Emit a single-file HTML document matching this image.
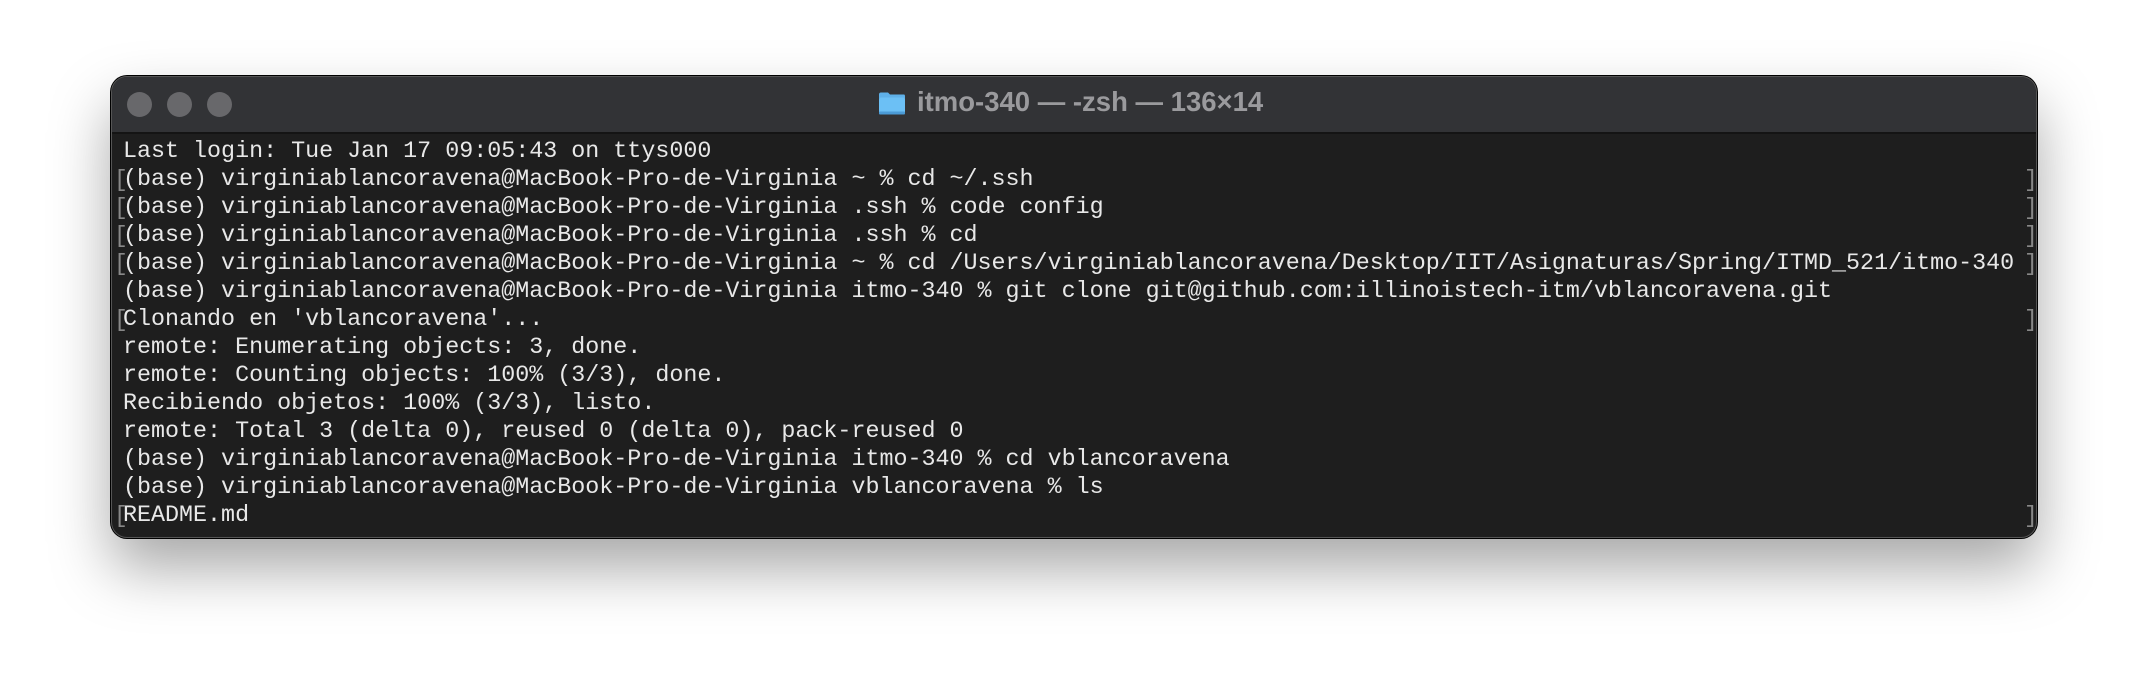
<!DOCTYPE html>
<html><head><meta charset="utf-8"><style>
html,body{margin:0;padding:0;width:2148px;height:686px;background:#fff;overflow:hidden;position:relative}
.win{position:absolute;left:111px;top:76px;width:1924px;height:460px;border-radius:16px;background:#1e1e1e;border:1px solid #555;box-shadow:0 30px 60px rgba(0,0,0,.35),0 0 0 1px #000;overflow:hidden}
.tb{position:absolute;left:0;top:0;right:0;height:55px;background:#323336;border-bottom:2px solid #141414}
.dot{position:absolute;top:15px;width:25px;height:25px;border-radius:50%;background:#68686b}
.title{position:absolute;left:805px;top:9px;font:bold 27.5px "Liberation Sans",sans-serif;color:#9a9a9d;white-space:nowrap}
.folder{position:absolute;left:766px;top:14px;width:28px;height:25px}
pre{position:absolute;left:11px;top:61px;margin:0;font:23.35px/28px "Liberation Mono",monospace;color:#e8e8e8;white-space:pre}
.rb{position:absolute;left:1912px;font:23px/28px "Liberation Mono",monospace;color:#888}
.lb{position:absolute;left:2px;font:23px/28px "Liberation Mono",monospace;color:#888}
</style></head><body>
<div class="win">
<div class="tb">
<div class="dot" style="left:15px"></div><div class="dot" style="left:55px"></div><div class="dot" style="left:95px"></div>
<svg class="folder" viewBox="0 0 28 24"><path d="M1 3 Q1 1 3 1 H10 L12 3 H26 Q27 3 27 5 V7 H1Z" fill="#5fb0e8"/><rect x="1" y="6" width="26" height="17" rx="2" fill="#6cc0f5"/><rect x="1" y="20" width="26" height="3" rx="1" fill="#4b9bd6"/></svg>
<div class="title">itmo-340 — -zsh — 136×14</div>
</div>
<pre>Last login: Tue Jan 17 09:05:43 on ttys000
(base) virginiablancoravena@MacBook-Pro-de-Virginia ~ % cd ~/.ssh
(base) virginiablancoravena@MacBook-Pro-de-Virginia .ssh % code config
(base) virginiablancoravena@MacBook-Pro-de-Virginia .ssh % cd
(base) virginiablancoravena@MacBook-Pro-de-Virginia ~ % cd /Users/virginiablancoravena/Desktop/IIT/Asignaturas/Spring/ITMD_521/itmo-340
(base) virginiablancoravena@MacBook-Pro-de-Virginia itmo-340 % git clone git@github.com:illinoistech-itm/vblancoravena.git
Clonando en 'vblancoravena'...
remote: Enumerating objects: 3, done.
remote: Counting objects: 100% (3/3), done.
Recibiendo objetos: 100% (3/3), listo.
remote: Total 3 (delta 0), reused 0 (delta 0), pack-reused 0
(base) virginiablancoravena@MacBook-Pro-de-Virginia itmo-340 % cd vblancoravena
(base) virginiablancoravena@MacBook-Pro-de-Virginia vblancoravena % ls
README.md</pre>
<div class="lb" style="top:89px">[</div><div class="lb" style="top:117px">[</div><div class="lb" style="top:145px">[</div><div class="lb" style="top:173px">[</div><div class="lb" style="top:229px">[</div><div class="lb" style="top:425px">[</div>
<div class="rb" style="top:89px">]</div><div class="rb" style="top:117px">]</div><div class="rb" style="top:145px">]</div><div class="rb" style="top:173px">]</div><div class="rb" style="top:229px">]</div><div class="rb" style="top:425px">]</div>
</div>
</body></html>
